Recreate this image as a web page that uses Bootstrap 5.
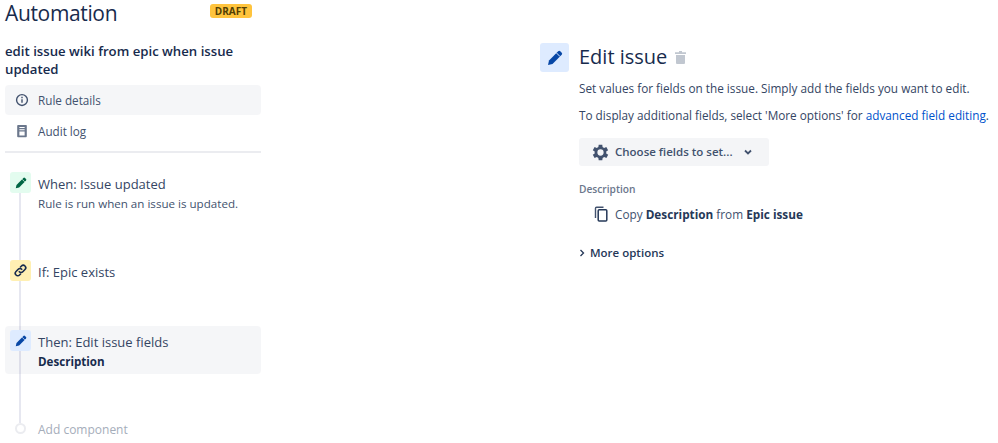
<!DOCTYPE html>
<html lang="en">
<head>
<meta charset="utf-8">
<title>Automation</title>
<link href="https://cdn.jsdelivr.net/npm/bootstrap@5.3.0/dist/css/bootstrap.min.css" rel="stylesheet">
<style>
html,body{height:443px;overflow:hidden;}
body{font-family:"Open Sans","Noto Sans",sans-serif;color:#172b4d;background:#fff;font-size:12px;}
.shell{height:443px;}
.side{width:256px;margin-left:5px;flex:none;padding-top:1px;}
.side-head{height:24px;}
.app-title{font-size:21px;font-weight:400;line-height:24px;margin:0;color:#172b4d;letter-spacing:-.35px;}
.draft-tag{background:#ffc43d;color:#533f04;font-size:10px;font-weight:700;line-height:14px;padding:0 5px;border-radius:3px;margin-right:9px;margin-top:-5px;}
.rule-name{font-size:13.2px;font-weight:600;line-height:18px;margin:17px 0 7px;color:#172b4d;}
.side-link{height:30px;border-radius:4px;padding-left:10px;gap:9px;color:#42526e;margin-bottom:1px;font-size:11.7px;}
.side-link.on{background:rgba(9,30,66,.04);}
.side-link span{padding-top:1px;}
.side-link svg{width:14px;height:14px;flex:none;}
.rule-sep{height:2px;background:#ebecf0;margin:5px 0 0;}
.flow{position:relative;padding-top:15px;}
.flow-line{position:absolute;left:14px;top:40px;height:230px;width:2px;background:#e6e7f0;}
.step{position:relative;padding:4px 5px;gap:7px;border-radius:4px;}
.step.on{background:rgba(9,30,66,.04);}
.step-icon{width:21px;height:21px;border-radius:3px;flex:none;display:flex;align-items:center;justify-content:center;}
.ic-green{background:#e3fcef;color:#006644;}
.ic-yellow{background:#fff0b3;color:#172b4d;}
.ic-blue{background:#deebff;color:#0747a6;}
.step-title{font-size:13px;line-height:20px;color:#344563;margin-top:2px;}
.step-sub{font-size:11.6px;line-height:20px;color:#42526e;}
.step-strong{font-size:11.6px;line-height:20px;font-weight:700;color:#172b4d;}
.step-one{height:88px;}
.step-two{height:70px;}
.step-three{margin-bottom:44px;height:48px;}
.add-row{position:relative;padding-left:10px;gap:12px;color:#a5adba;font-size:12px;line-height:20px;}
.add-row span:last-child{padding-top:2px;}
.add-dot{width:11px;height:11px;border-radius:50%;border:2px solid #ebecf0;background:#fff;margin-top:5px;flex:none;}
.main{margin-left:279px;padding-top:43px;width:450px;flex:none;}
.main-icon{width:29px;height:29px;border-radius:3px;background:#deebff;color:#0747a6;flex:none;display:flex;align-items:center;justify-content:center;margin-right:10px;}
.main-title{font-size:20px;line-height:26px;font-weight:500;margin:0 0 2px;color:#172b4d;white-space:nowrap;}
.main-body{margin-left:39px;white-space:nowrap;}
.para{font-size:11.77px;line-height:16px;color:#344563;margin:0 0 11px;}
.para-first{margin-top:8px;}
.para-last{margin-bottom:15px;}
.para a{color:#0052cc;text-decoration:none;}
.fields-btn{background:#f4f5f7;color:#42526e;border:0;border-radius:3px;height:28px;width:190px;font-size:11.5px;font-weight:600;padding:0 0 0 13px;gap:6px;}
.fields-btn:hover{background:#f4f5f7;color:#42526e;}
.field-label{font-size:10.2px;font-weight:600;color:#6b778c;line-height:14px;margin-top:16px;}
.field-row{margin:9px 0 0 14px;gap:6px;font-size:11.77px;line-height:18px;color:#42526e;}
.field-row b{color:#253858;font-weight:700;}
.more-row{margin-top:21px;gap:5px;font-size:11.5px;font-weight:600;line-height:18px;color:#253858;}
.notch{fill:none;stroke-width:1;}
.ic-green .notch{stroke:#e3fcef;}
.ic-blue .notch,.main-icon .notch{stroke:#deebff;}
</style>
</head>
<body>
<div class="shell d-flex">
  <aside class="side">
    <div class="side-head d-flex justify-content-between align-items-center">
      <h1 class="app-title">Automation</h1>
      <span class="draft-tag">DRAFT</span>
    </div>
    <div class="rule-name">edit issue wiki from epic when issue updated</div>
    <div class="side-link on d-flex align-items-center">
      <svg viewBox="0 0 16 16" fill="none" stroke="#42526e" stroke-width="1.6"><circle cx="8" cy="8" r="6.2"/><path d="M8 7.200v4M8 4.400v1.600"/></svg>
      <span>Rule details</span>
    </div>
    <div class="side-link d-flex align-items-center">
      <svg viewBox="0 0 16 16"><path fill="#6b778c" d="M3.500 1h9a1 1 0 0 1 1 1v12a1 1 0 0 1-1 1h-9a1 1 0 0 1-1-1V2a1 1 0 0 1 1-1z"/><path fill="#fff" d="M5 3.500h6v1.200H5zM5 6h6v1.200H5zM5 8.500h6V13H5z"/></svg>
      <span>Audit log</span>
    </div>
    <div class="rule-sep"></div>
    <div class="flow">
      <div class="flow-line"></div>
      <div class="step step-one d-flex">
        <span class="step-icon ic-green"><svg width="12" height="12" viewBox="0 0 16 16" fill="currentColor"><path d="M11.200 1.300a1.500 1.500 0 0 1 2.100 0l1.400 1.400a1.500 1.500 0 0 1 0 2.100L5.500 14 1 15l1-4.500z"/><path class="notch" d="M9.500 3l3.500 3.500"/></svg></span>
        <div><div class="step-title">When: Issue updated</div><div class="step-sub">Rule is run when an issue is updated.</div></div>
      </div>
      <div class="step step-two d-flex">
        <span class="step-icon ic-yellow"><svg width="13" height="13" viewBox="0 0 16 16" fill="none" stroke="currentColor" stroke-width="2" stroke-linecap="round"><path d="M6.500 9.500a3 3 0 0 0 4.300 0l2.700-2.700a3 3 0 0 0-4.300-4.300L8 3.700"/><path d="M9.500 6.500a3 3 0 0 0-4.300 0L2.500 9.200a3 3 0 0 0 4.300 4.300L8 12.300"/></svg></span>
        <div class="step-title">If: Epic exists</div>
      </div>
      <div class="step step-three on d-flex">
        <span class="step-icon ic-blue"><svg width="12" height="12" viewBox="0 0 16 16" fill="currentColor"><path d="M11.200 1.300a1.500 1.500 0 0 1 2.100 0l1.400 1.400a1.500 1.500 0 0 1 0 2.100L5.500 14 1 15l1-4.500z"/><path class="notch" d="M9.500 3l3.500 3.500"/></svg></span>
        <div><div class="step-title">Then: Edit issue fields</div><div class="step-strong">Description</div></div>
      </div>
      <div class="add-row d-flex align-items-start"><span class="add-dot"></span><span>Add component</span></div>
    </div>
  </aside>
  <main class="main">
    <div class="d-flex align-items-center">
      <span class="main-icon"><svg width="16" height="16" viewBox="0 0 16 16" fill="currentColor"><path d="M11.200 1.300a1.500 1.500 0 0 1 2.100 0l1.400 1.400a1.500 1.500 0 0 1 0 2.100L5.500 14 1 15l1-4.500z"/><path class="notch" d="M9.500 3l3.500 3.500"/></svg></span>
      <h2 class="main-title">Edit issue</h2>
      <svg class="ms-2" width="11" height="13" viewBox="0 0 11 13" fill="#c1c7d0"><path d="M4 0h3v1.300h4V3H0V1.300h4zM1 4h9v8a1 1 0 0 1-1 1H2a1 1 0 0 1-1-1z"/></svg>
    </div>
    <div class="main-body">
      <p class="para para-first">Set values for fields on the issue. Simply add the fields you want to edit.</p>
      <p class="para para-last">To display additional fields, select 'More options' for <a href="#">advanced field editing</a>.</p>
      <button class="fields-btn btn d-flex align-items-center" type="button">
        <svg width="17" height="17" viewBox="3.500 2.500 19 19" fill="#42526e"><path d="M19.400 13a7.600 7.600 0 0 0 0-2l2.100-1.600-2-3.500-2.500 1a7.600 7.600 0 0 0-1.700-1L15 3.200h-4l-.4 2.700a7.600 7.600 0 0 0-1.700 1l-2.500-1-2 3.500L6.500 11a7.600 7.600 0 0 0 0 2l-2.100 1.600 2 3.500 2.500-1a7.600 7.600 0 0 0 1.700 1l.4 2.700h4l.4-2.700a7.600 7.600 0 0 0 1.700-1l2.500 1 2-3.500zM13 15.500a3.500 3.500 0 1 1 0-7 3.500 3.500 0 0 1 0 7z"/></svg>
        <span>Choose fields to set...</span>
        <svg class="ms-1" width="10" height="10" viewBox="0 0 10 10" fill="none" stroke="#42526e" stroke-width="1.800"><path d="M2 3.500l3 3 3-3"/></svg>
      </button>
      <div class="field-label">Description</div>
      <div class="field-row d-flex align-items-center">
        <svg width="16" height="16" viewBox="0 0 16 16" fill="none" stroke="#42526e" stroke-width="1.400"><rect x="5.200" y="3.700" width="8.600" height="11.300" rx="1" stroke="#253858" stroke-width="1.500"/><path d="M2.500 12V2.200a1 1 0 0 1 1-1h7"/></svg>
        <span>Copy <b>Description</b> from <b>Epic issue</b></span>
      </div>
      <div class="more-row d-flex align-items-center">
        <svg width="6" height="8" viewBox="0 0 6 8" fill="none" stroke="#253858" stroke-width="1.300"><path d="M1.500 1l3 3-3 3"/></svg>
        <span>More options</span>
      </div>
    </div>
  </main>
</div>
<script src="https://cdn.jsdelivr.net/npm/bootstrap@5.3.0/dist/js/bootstrap.bundle.min.js"></script>
</body>
</html>
